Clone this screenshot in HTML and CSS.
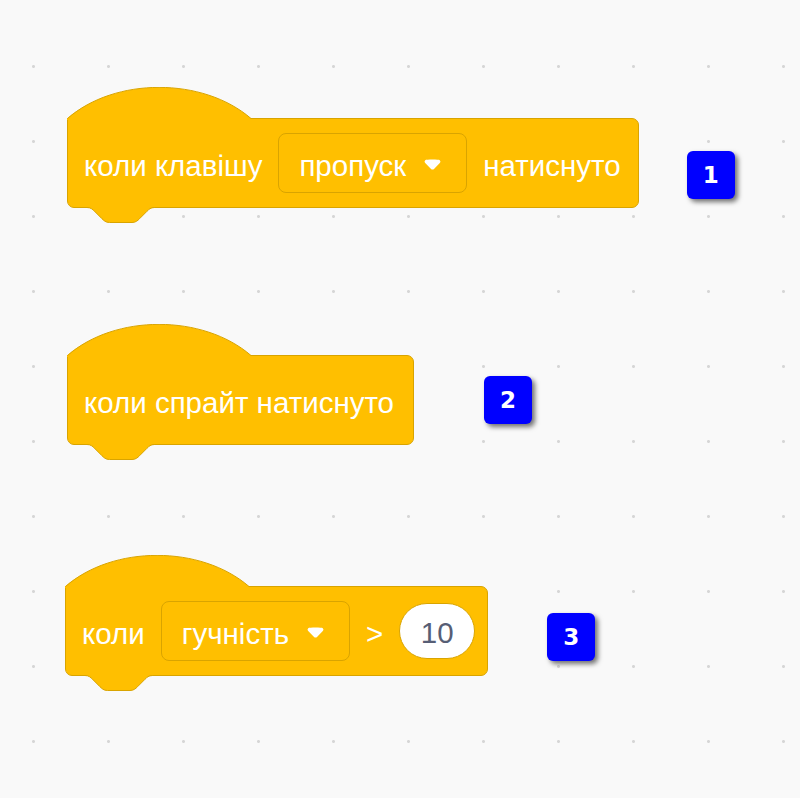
FILE: index.html
```html
<!DOCTYPE html>
<html lang="uk">
<head>
<meta charset="utf-8">
<title>Блоки подій</title>
<link rel="stylesheet" href="styles.css">
</head>
<body>
<main class="workspace">

  <div class="script-row row-one">
    <div class="hat-block">
      <svg class="hat-cap" width="186" height="33" viewBox="0 0 186 33">
        <path class="cap-fill" d="M0,33 L0,31.5 C48,-10 136,-10 184,31.5 L184,33 Z"/>
        <path class="cap-line" d="M0.5,31.5 C48,-10 136,-10 184,31.5"/>
      </svg>
      <span class="label">коли клавішу</span>
      <span class="dropdown">
        <span class="label">пропуск</span>
        <svg class="arrow" width="19" height="13" viewBox="0 0 12.71 8.79"><path d="M6.36,7.79a1.43,1.43,0,0,1-1-.42L1.42,3.45a1.44,1.44,0,0,1,0-2c.56-.56,9.31-.56,9.87,0a1.44,1.44,0,0,1,0,2L7.37,7.37A1.43,1.43,0,0,1,6.36,7.79Z"/></svg>
      </span>
      <span class="label">натиснуто</span>
      <svg class="notch" width="68" height="17" viewBox="0 0 68 17">
        <path class="notch-fill" d="M0,0 L0,0.5 C3.75,0.5 5.625,2.375 7.5,4.25 L15,11.75 C16.875,13.625 18.75,15.5 22.5,15.5 H45 C48.75,15.5 50.625,13.625 52.5,11.75 L60,4.25 C61.875,2.375 63.75,0.5 67.5,0.5 L67.5,0 Z"/>
        <path class="notch-line" d="M0,0.5 C3.75,0.5 5.625,2.375 7.5,4.25 L15,11.75 C16.875,13.625 18.75,15.5 22.5,15.5 H45 C48.75,15.5 50.625,13.625 52.5,11.75 L60,4.25 C61.875,2.375 63.75,0.5 67.5,0.5"/>
      </svg>
    </div>
    <div class="badge badge-one">1</div>
  </div>

  <div class="script-row row-two">
    <div class="hat-block wide-end">
      <svg class="hat-cap" width="186" height="33" viewBox="0 0 186 33">
        <path class="cap-fill" d="M0,33 L0,31.5 C48,-10 136,-10 184,31.5 L184,33 Z"/>
        <path class="cap-line" d="M0.5,31.5 C48,-10 136,-10 184,31.5"/>
      </svg>
      <span class="label">коли спрайт натиснуто</span>
      <svg class="notch" width="68" height="17" viewBox="0 0 68 17">
        <path class="notch-fill" d="M0,0 L0,0.5 C3.75,0.5 5.625,2.375 7.5,4.25 L15,11.75 C16.875,13.625 18.75,15.5 22.5,15.5 H45 C48.75,15.5 50.625,13.625 52.5,11.75 L60,4.25 C61.875,2.375 63.75,0.5 67.5,0.5 L67.5,0 Z"/>
        <path class="notch-line" d="M0,0.5 C3.75,0.5 5.625,2.375 7.5,4.25 L15,11.75 C16.875,13.625 18.75,15.5 22.5,15.5 H45 C48.75,15.5 50.625,13.625 52.5,11.75 L60,4.25 C61.875,2.375 63.75,0.5 67.5,0.5"/>
      </svg>
    </div>
    <div class="badge badge-two">2</div>
  </div>

  <div class="script-row row-three">
    <div class="hat-block compact-end">
      <svg class="hat-cap" width="186" height="33" viewBox="0 0 186 33">
        <path class="cap-fill" d="M0,33 L0,31.5 C48,-10 136,-10 184,31.5 L184,33 Z"/>
        <path class="cap-line" d="M0.5,31.5 C48,-10 136,-10 184,31.5"/>
      </svg>
      <span class="label">коли</span>
      <span class="dropdown">
        <span class="label">гучність</span>
        <svg class="arrow" width="19" height="13" viewBox="0 0 12.71 8.79"><path d="M6.36,7.79a1.43,1.43,0,0,1-1-.42L1.42,3.45a1.44,1.44,0,0,1,0-2c.56-.56,9.31-.56,9.87,0a1.44,1.44,0,0,1,0,2L7.37,7.37A1.43,1.43,0,0,1,6.36,7.79Z"/></svg>
      </span>
      <span class="label">&gt;</span>
      <span class="number-input">10</span>
      <svg class="notch" width="68" height="17" viewBox="0 0 68 17">
        <path class="notch-fill" d="M0,0 L0,0.5 C3.75,0.5 5.625,2.375 7.5,4.25 L15,11.75 C16.875,13.625 18.75,15.5 22.5,15.5 H45 C48.75,15.5 50.625,13.625 52.5,11.75 L60,4.25 C61.875,2.375 63.75,0.5 67.5,0.5 L67.5,0 Z"/>
        <path class="notch-line" d="M0,0.5 C3.75,0.5 5.625,2.375 7.5,4.25 L15,11.75 C16.875,13.625 18.75,15.5 22.5,15.5 H45 C48.75,15.5 50.625,13.625 52.5,11.75 L60,4.25 C61.875,2.375 63.75,0.5 67.5,0.5"/>
      </svg>
    </div>
    <div class="badge badge-three">3</div>
  </div>

</main>
</body>
</html>
```

FILE: styles.css
```css
html, body {
  margin: 0;
  height: 100%;
}

body {
  background-color: #f9f9f9;
  background-image: radial-gradient(circle at 1.5px 1.5px, #d6d6d6 0, #d6d6d6 1.1px, rgba(214, 214, 214, 0) 1.8px);
  background-size: 75px 75px;
  background-position: 32px 65px;
  font-family: "Liberation Sans", Arial, Helvetica, sans-serif;
  overflow: hidden;
}

.workspace {
  display: flex;
  flex-direction: column;
  padding-left: 67px;
}

.script-row {
  display: flex;
  align-items: flex-start;
}

.row-one { margin-top: 118px; }
.row-two { margin-top: 147px; }
.row-three { margin-top: 141px; margin-left: -2px; }

/* event hat block body */
.hat-block {
  position: relative;
  box-sizing: border-box;
  height: 90px;
  display: flex;
  align-items: center;
  gap: 16px;
  padding: 0 17px 0 16px;
  background: #ffbf00;
  border: 1px solid #d9a400;
  border-radius: 0 7px 7px 7px;
}

.hat-block.wide-end {
  padding-right: 19px;
}

.hat-block.compact-end {
  padding-right: 12px;
}

.hat-cap {
  position: absolute;
  left: -1px;
  top: -32px;
  display: block;
}

.cap-fill { fill: #ffbf00; }
.cap-line { fill: none; stroke: #d9a400; stroke-width: 1; }

.notch {
  position: absolute;
  left: 19px;
  top: 100%;
  display: block;
}

.notch-fill { fill: #ffbf00; }
.notch-line { fill: none; stroke: #d9a400; stroke-width: 1; }

.label {
  color: #ffffff;
  font-size: 29.5px;
  line-height: 1;
  padding-top: 5px;
  white-space: nowrap;
}

.dropdown {
  box-sizing: border-box;
  height: 60px;
  display: flex;
  align-items: center;
  gap: 17px;
  padding: 0 24px 0 20px;
  border: 1px solid #d9a400;
  border-radius: 8px;
  background: #ffbf00;
}

.arrow {
  display: block;
  fill: #ffffff;
  margin-top: 2px;
}

.number-input {
  box-sizing: border-box;
  width: 76px;
  height: 56px;
  display: flex;
  align-items: center;
  justify-content: center;
  padding-top: 3px;
  background: #ffffff;
  border: 1px solid #d9a400;
  border-radius: 28px;
  color: #575e75;
  font-size: 29.5px;
  line-height: 1;
}

/* numbered markers beside each script */
.badge {
  width: 48px;
  height: 48px;
  display: flex;
  align-items: center;
  justify-content: center;
  background: #0000ff;
  border-radius: 6px;
  box-shadow: 3px 3px 5px rgba(0, 0, 0, 0.55);
  color: #ffffff;
  font-family: "DejaVu Sans", Verdana, sans-serif;
  font-weight: bold;
  font-size: 23px;
  line-height: 1;
}

.badge-one { margin: 33px 0 0 48px; }
.badge-two { margin: 21px 0 0 70px; }
.badge-three { margin: 27px 0 0 59px; }
```
